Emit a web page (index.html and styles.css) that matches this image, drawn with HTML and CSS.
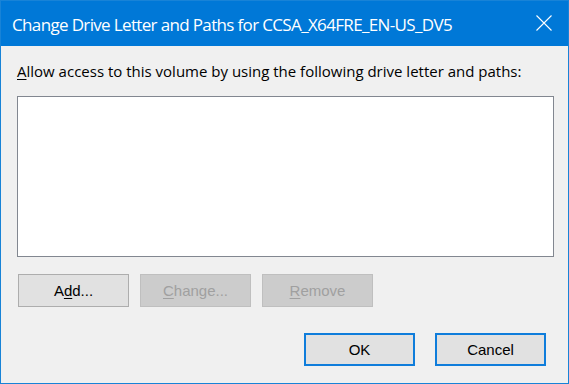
FILE: index.html
```html
<!DOCTYPE html>
<html>
<head>
<meta charset="utf-8">
<link rel="stylesheet" href="styles.css">
</head>
<body>
<div class="window">
  <div class="titlebar">
    <span class="title">Change Drive Letter and Paths for CCSA_X64FRE_EN-US_DV5</span>
    <svg class="close" width="16" height="16" viewBox="0 0 16 16"><path d="M0.5 0.5 L15.5 15.5 M15.5 0.5 L0.5 15.5" stroke="#ffffff" stroke-width="1.1" fill="none"/></svg>
  </div>
  <div class="content">
    <div class="label"><u>A</u>llow access to this volume by using the following drive letter and paths:</div>
    <div class="listbox"></div>
    <div class="row actions">
      <button class="btn">A<u>d</u>d...</button>
      <button class="btn disabled"><u>C</u>hange...</button>
      <button class="btn disabled"><u>R</u>emove</button>
    </div>
    <div class="row footer">
      <button class="btn default">OK</button>
      <button class="btn default">Cancel</button>
    </div>
  </div>
</div>
</body>
</html>
```
FILE: styles.css
```css
html, body {
  margin: 0;
  padding: 0;
  background: #f0f0f0;
}
.window {
  width: 569px;
  height: 384px;
  box-sizing: border-box;
  border: 1px solid #1883d7;
  background: #f0f0f0;
  display: flex;
  flex-direction: column;
}
.titlebar {
  height: 45px;
  background: #0078d7;
  display: flex;
  align-items: center;
  justify-content: space-between;
  padding: 0 16px 0 11px;
  flex-shrink: 0;
}
.title {
  color: #ffffff;
  font-family: "Open Sans", "Noto Sans", sans-serif;
  font-size: 17px;
  letter-spacing: -0.65px;
  position: relative;
  top: 1px;
}
.close {
  display: block;
  position: relative;
  top: -1px;
}
.content {
  padding: 0 14px 0 16px;
  display: flex;
  flex-direction: column;
  font-family: "Open Sans", "Noto Sans", sans-serif;
  font-size: 15px;
  color: #000000;
}
.label {
  margin-top: 15px;
  height: 20px;
  line-height: 20px;
  letter-spacing: 0px;
}
.label u {
  text-underline-offset: 2px;
}
.listbox {
  margin-top: 15px;
  width: 537px;
  height: 161px;
  box-sizing: border-box;
  background: #ffffff;
  border: 1px solid #828790;
}
.row {
  display: flex;
}
.actions {
  margin-top: 17px;
  padding-left: 1px;
  gap: 11px;
}
.footer {
  margin-top: 26px;
  justify-content: flex-end;
  gap: 20px;
  padding-right: 8px;
}
.btn {
  width: 111px;
  height: 33px;
  box-sizing: border-box;
  background: #e1e1e1;
  border: 1px solid #adadad;
  font-family: "Liberation Sans", Arial, sans-serif;
  font-size: 15px;
  color: #000000;
  padding: 0;
  margin: 0;
  outline: none;
}
.btn u {
  text-underline-offset: 2px;
}
.btn.disabled {
  background: #cccccc;
  border-color: #bfbfbf;
  color: #a0a0a0;
}
.btn.default {
  border: 2px solid #0f7ddb;
}
```
